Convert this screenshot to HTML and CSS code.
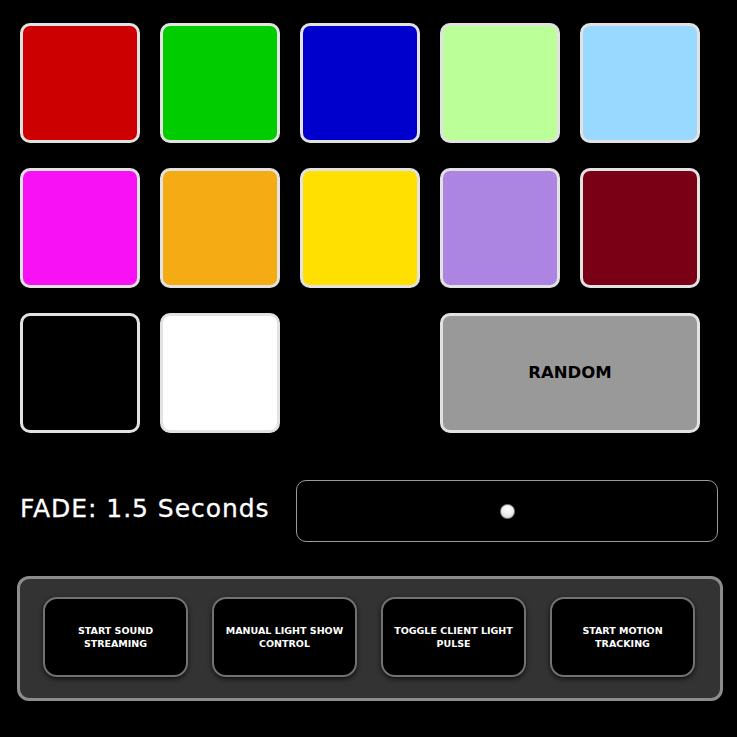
FILE: index.html
```html
<!DOCTYPE html>
<html>
<head>
<meta charset="utf-8">
<link rel="stylesheet" href="styles.css">
</head>
<body>
<div class="app">
  <div class="swatches">
    <div class="swatch red"></div>
    <div class="swatch green"></div>
    <div class="swatch blue"></div>
    <div class="swatch lightgreen"></div>
    <div class="swatch lightblue"></div>
    <div class="swatch magenta"></div>
    <div class="swatch orange"></div>
    <div class="swatch yellow"></div>
    <div class="swatch purple"></div>
    <div class="swatch darkred"></div>
    <div class="swatch black"></div>
    <div class="swatch white"></div>
    <div class="spacer"></div>
    <div class="swatch random">RANDOM</div>
  </div>
  <div class="fade-row">
    <div class="fade-label">FADE: 1.5 Seconds</div>
    <div class="slider"><div class="thumb"></div></div>
  </div>
  <div class="panel">
    <div class="btn">START SOUND<br>STREAMING</div>
    <div class="btn">MANUAL LIGHT SHOW<br>CONTROL</div>
    <div class="btn">TOGGLE CLIENT LIGHT<br>PULSE</div>
    <div class="btn">START MOTION<br>TRACKING</div>
  </div>
</div>
</body>
</html>
```
FILE: styles.css
```css
html, body {
  margin: 0;
  background: #000;
}
body {
  font-family: "DejaVu Sans", Verdana, sans-serif;
  color: #fff;
}
.app {
  padding-top: 23px;
}
.swatches {
  display: grid;
  grid-template-columns: repeat(5, 120px);
  grid-auto-rows: 120px;
  column-gap: 20px;
  row-gap: 25px;
  margin-left: 20px;
}
.swatch {
  box-sizing: border-box;
  border: 3px solid #e2e2e2;
  border-radius: 10px;
}
.red { background: #cc0000; }
.green { background: #00cc00; }
.blue { background: #0000cc; }
.lightgreen { background: #bbff99; }
.lightblue { background: #99d9ff; }
.magenta { background: #f811f5; }
.orange { background: #f5ab13; }
.yellow { background: #ffe000; }
.purple { background: #ac85e2; }
.darkred { background: #7a0016; }
.black { background: #000; }
.white { background: #fff; }
.random {
  grid-column: span 2;
  background: #999;
  color: #000;
  font-weight: bold;
  font-size: 16.5px;
  display: flex;
  align-items: center;
  justify-content: center;
  padding-bottom: 2px;
}
.fade-row {
  display: flex;
  align-items: center;
  height: 62px;
  margin: 47px 19px 0 20px;
}
.fade-label {
  font-size: 25px;
  letter-spacing: 0.95px;
  color: #fff;
  margin-bottom: 6px;
  -webkit-text-stroke: 0.3px #fff;
}
.slider {
  margin-left: auto;
  width: 422px;
  height: 62px;
  box-sizing: border-box;
  border: 1px solid #9a9a9a;
  border-radius: 10px;
  display: flex;
  align-items: center;
  justify-content: center;
}
.thumb {
  width: 15px;
  height: 15px;
  border-radius: 50%;
  box-sizing: border-box;
  border: 1px solid #8a8a8a;
  background: radial-gradient(circle at 50% 35%, #ffffff 0%, #f0f0f0 50%, #c8c8c8 100%);
}
.panel {
  box-sizing: border-box;
  width: 706px;
  height: 125px;
  margin: 34px 0 0 17px;
  border: 3px solid #8c8c8c;
  border-radius: 12px;
  background: #333;
  display: flex;
  gap: 24px;
  padding: 18px 0 0 23px;
}
.btn {
  box-sizing: border-box;
  width: 145px;
  height: 80px;
  border: 2px solid #727272;
  border-radius: 14px;
  background: #000;
  box-shadow: 0 2px 5px rgba(0, 0, 0, 0.7);
  color: #fff;
  font-weight: bold;
  font-size: 9.5px;
  line-height: 13px;
  text-align: center;
  display: flex;
  align-items: center;
  justify-content: center;
}
```
